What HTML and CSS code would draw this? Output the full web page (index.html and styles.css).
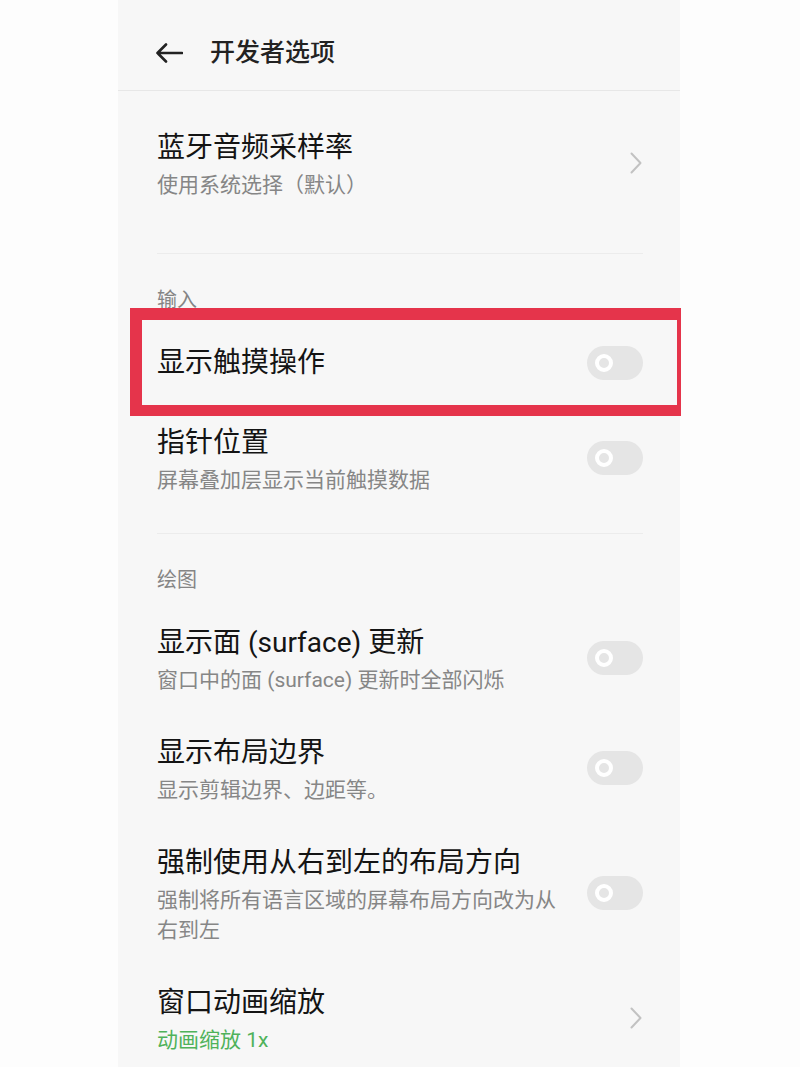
FILE: index.html
```html
<!DOCTYPE html>
<html lang="zh-CN">
<head>
<meta charset="utf-8">
<title>开发者选项</title>
<link rel="stylesheet" href="styles.css">
</head>
<body>
<div class="phone">
  <header class="header">
    <svg class="back" width="28" height="20" viewBox="0 0 28 20" aria-hidden="true">
      <path d="M27 10H2.5M11 1.5L2.5 10L11 18.5" fill="none" stroke="#222" stroke-width="2.6" stroke-linecap="round" stroke-linejoin="round"/>
    </svg>
    <h1 class="header-title">开发者选项</h1>
  </header>

  <section class="group group--first">
    <div class="item">
      <div class="item-text">
        <div class="item-title">蓝牙音频采样率</div>
        <div class="item-sub">使用系统选择（默认）</div>
      </div>
      <svg class="chevron" width="12" height="22" viewBox="0 0 12 22" aria-hidden="true">
        <path d="M1.5 1.5L10.5 11L1.5 20.5" fill="none" stroke="#c2c2c2" stroke-width="2" stroke-linecap="round" stroke-linejoin="round"/>
      </svg>
    </div>
  </section>
  <div class="divider"></div>

  <section class="group">
    <div class="section-label">输入</div>
    <div class="item item--highlight">
      <div class="item-text">
        <div class="item-title">显示触摸操作</div>
      </div>
      <span class="toggle"><span class="knob"></span></span>
    </div>
    <div class="item">
      <div class="item-text">
        <div class="item-title">指针位置</div>
        <div class="item-sub">屏幕叠加层显示当前触摸数据</div>
      </div>
      <span class="toggle"><span class="knob"></span></span>
    </div>
  </section>
  <div class="divider"></div>

  <section class="group">
    <div class="section-label">绘图</div>
    <div class="item">
      <div class="item-text">
        <div class="item-title">显示面 (surface) 更新</div>
        <div class="item-sub">窗口中的面 (surface) 更新时全部闪烁</div>
      </div>
      <span class="toggle"><span class="knob"></span></span>
    </div>
    <div class="item">
      <div class="item-text">
        <div class="item-title">显示布局边界</div>
        <div class="item-sub">显示剪辑边界、边距等。</div>
      </div>
      <span class="toggle"><span class="knob"></span></span>
    </div>
    <div class="item">
      <div class="item-text">
        <div class="item-title">强制使用从右到左的布局方向</div>
        <div class="item-sub">强制将所有语言区域的屏幕布局方向改为从右到左</div>
      </div>
      <span class="toggle"><span class="knob"></span></span>
    </div>
    <div class="item">
      <div class="item-text">
        <div class="item-title">窗口动画缩放</div>
        <div class="item-sub item-sub--accent">动画缩放 1x</div>
      </div>
      <svg class="chevron" width="12" height="22" viewBox="0 0 12 22" aria-hidden="true">
        <path d="M1.5 1.5L10.5 11L1.5 20.5" fill="none" stroke="#c2c2c2" stroke-width="2" stroke-linecap="round" stroke-linejoin="round"/>
      </svg>
    </div>
  </section>
</div>
</body>
</html>
```

FILE: styles.css
```css
html, body {
  margin: 0;
  padding: 0;
  background: #fdfdfd;
  height: 100%;
  overflow: hidden;
}

body {
  font-family: Roboto, "Noto Sans CJK SC", "Noto Sans", sans-serif;
  color: #141414;
}

.phone {
  width: 562px;
  margin-left: 118px;
  min-height: 100vh;
  background: #f7f7f7;
}

.header {
  height: 74px;
  padding: 16px 0 0 37px;
  display: flex;
  align-items: center;
  border-bottom: 1px solid #e7e7e7;
}

.back {
  display: block;
  flex: none;
}

.header-title {
  margin: 0 0 0 27px;
  font-size: 25px;
  font-weight: 500;
  line-height: 34px;
  color: #222;
}

.group {
  padding-bottom: 20px;
}

.group--first {
  padding-top: 17px;
  padding-bottom: 35px;
}

.divider {
  height: 1px;
  background: #ececec;
  margin: 0 37px 0 39px;
}

.section-label {
  padding: 31px 39px 8px;
  font-size: 20px;
  line-height: 30px;
  color: #858585;
}

.item {
  position: relative;
  display: flex;
  align-items: center;
  padding: 18px 37px 18px 39px;
}

.item-text {
  flex: 1;
  min-width: 0;
}

.item-title {
  font-size: 28px;
  line-height: 44px;
  color: #141414;
}

.item-sub {
  font-size: 21px;
  line-height: 30px;
  color: #868686;
}

.item-sub--accent {
  color: #4fb25a;
}

.chevron {
  display: block;
  flex: none;
  margin-left: 20px;
  margin-right: 1px;
}

.toggle {
  position: relative;
  flex: none;
  width: 56px;
  height: 34px;
  margin-left: 20px;
  border-radius: 17px;
  background: #e5e5e5;
}

.knob {
  position: absolute;
  left: 8px;
  top: 8px;
  width: 10px;
  height: 10px;
  border: 4px solid #ffffff;
  border-radius: 50%;
}

.item--highlight::after {
  content: "";
  position: absolute;
  top: -15px;
  bottom: -13px;
  left: 12px;
  right: -1px;
  border-style: solid;
  border-color: #e5344b;
  border-width: 12px 4px 11px 12px;
  pointer-events: none;
}
```
